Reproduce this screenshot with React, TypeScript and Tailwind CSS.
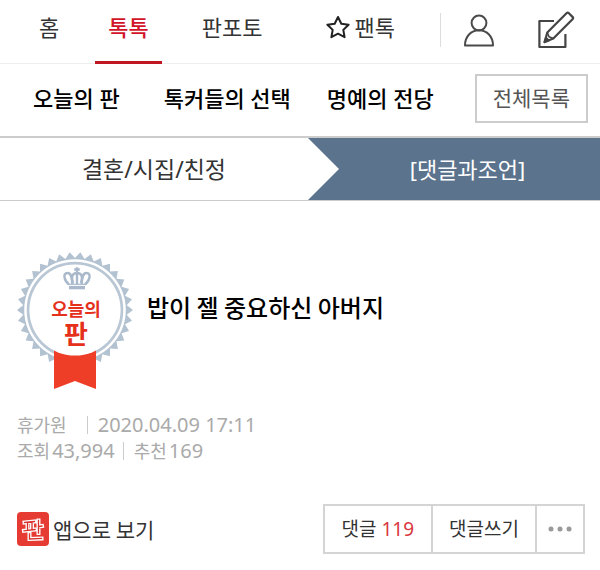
const TEETH = 34;

const teeth = Array.from({ length: TEETH * 2 }, (_, i) => {
  const angle = ((i + 1) * Math.PI) / TEETH - Math.PI / 2;
  const radius = i % 2 === 0 ? 58 : 52;
  return `${(58 + radius * Math.cos(angle)).toFixed(2)},${(58 + radius * Math.sin(angle)).toFixed(2)}`;
}).join(' ');

function StarIcon() {
  return (
    <svg width="24" height="24" viewBox="0 0 24 24" aria-hidden="true">
      <path
        d="M12 2l3.300 6.700 7.300 1-5.300 5.200 1.300 7.300-6.600-3.500-6.600 3.500 1.300-7.300-5.300-5.200 7.300-1z"
        fill="none"
        stroke="#222"
        strokeWidth="2"
        strokeLinejoin="round"
      />
    </svg>
  );
}

function PersonIcon() {
  return (
    <svg width="32" height="34" viewBox="0 0 32 34" fill="none" stroke="#4a4a4a" strokeWidth="2" aria-hidden="true">
      <circle cx="16" cy="10" r="7.400" />
      <path d="M2 32.500c0-9 6-15.200 14-15.200s14 6.200 14 15.200z" strokeLinejoin="round" />
    </svg>
  );
}

function WriteIcon() {
  return (
    <svg
      width="38"
      height="38"
      viewBox="0 0 38 38"
      fill="none"
      stroke="#444"
      strokeWidth="2.2"
      strokeLinejoin="round"
      aria-hidden="true"
    >
      <path d="M17 10H2.400v26h26V23" />
      <path d="M10.300 21.500L29.500 2.300q1.200-1.200 2.400 0l3.600 3.600q1.200 1.200 0 2.400L16.300 27.500 7.600 31z" />
      <path d="M10.300 21.500l1.700 4.300 4.300 1.700" strokeWidth="1.600" />
      <path d="M7.600 31l1.400-4 2.600 2.400z" fill="#444" />
    </svg>
  );
}

function TodayBadge() {
  return (
    <svg width="116" height="138" viewBox="0 0 116 138" role="img" aria-label="오늘의 판" className="shrink-0">
      <polygon points={teeth} fill="#b3c2d1" />
      <circle cx="58" cy="58" r="50.800" fill="#fff" />
      <circle cx="58" cy="58" r="46.600" fill="#fff" stroke="#b9c7d5" strokeWidth="3.400" />
      <path d="M37 84h42v53l-21-8-21 8z" fill="#ee3e28" />
      <circle cx="58" cy="58" r="45.600" fill="#fff" />
      {/* Crown */}
      <g fill="none" stroke="#a9b9cb" strokeWidth="2.400">
        <path d="M52 35.600h16" strokeWidth="3.400" />
        <path d="M52 32.500c-5-4-6.500-11.500-1.500-11.500 4 0 4.500 4.500 4.800 11M68 32.500c5-4 6.500-11.500 1.500-11.500-4 0-4.500 4.500-4.800 11" />
        <path d="M60 15.200V32M57.200 17.500h5.600M56 31c-2-6-1-10 4-10s6 4 4 10" />
        <path d="M51 32.300h18" strokeWidth="1.200" />
      </g>
      <text y="64" textAnchor="middle" fontWeight="700" fill="#e5301c">
        <tspan x="59" fontSize="18">오늘의</tspan>
        <tspan x="59" y="92" fontSize="26">판</tspan>
      </text>
    </svg>
  );
}

function AppIcon() {
  const strokes =
    'M7.500 10.500l10-1M10.500 11v6.500M15 10.500v6.500M7 18.800l11-1.300M21.500 8.500v12.500M22 14.500l3-.5M12.500 22v5l12-.5';
  return (
    <svg width="32" height="34" viewBox="0 0 32 34" fill="none" strokeLinecap="square" aria-hidden="true">
      <rect width="32" height="34" rx="4" fill="#e63b33" />
      <path d={strokes} stroke="#fff" strokeWidth="4" />
      <path d={strokes} stroke="#d8322c" strokeWidth="1.300" />
    </svg>
  );
}

export default function App() {
  return (
    <div className="min-h-screen w-full bg-white font-['Noto_Sans','Noto_Sans_CJK_KR',sans-serif] text-[22px] leading-8 text-[#333]">
      <header>
        {/* Main navigation */}
        <div className="flex h-16 items-start border-b border-[#eee]">
          <nav className="flex">
            <a href="#home" className="ml-[27px] flex h-16 items-center px-3 pb-[11px]">
              홈
            </a>
            <a
              href="#talk"
              className="ml-6 flex h-16 items-center border-b-[3px] border-[#bf1722] px-[13px] pb-2 font-medium text-[#d2142a]"
            >
              톡톡
            </a>
            <a href="#photo" className="ml-7 flex h-16 items-center px-3 pb-[11px]">
              판포토
            </a>
            <a href="#fan" className="ml-10 flex h-16 items-center gap-1 px-3 pb-[11px]">
              <StarIcon />
              팬톡
            </a>
          </nav>
          <div className="ml-auto flex h-16 items-center pr-[25px] pb-1">
            <span className="h-[34px] w-px bg-[#ddd]" />
            <button type="button" aria-label="내 정보" className="ml-[22px]">
              <PersonIcon />
            </button>
            <button type="button" aria-label="글쓰기" className="ml-[42px]">
              <WriteIcon />
            </button>
          </div>
        </div>

        {/* Sub navigation */}
        <div className="flex h-[74px] items-center border-b-2 border-[#ccc] pr-3 pb-1 pl-[33px] font-medium text-black">
          <a href="#today">오늘의 판</a>
          <a href="#choice" className="ml-11">
            톡커들의 선택
          </a>
          <a href="#fame" className="ml-9">
            명예의 전당
          </a>
          <button
            type="button"
            className="ml-auto h-[49px] border-2 border-[#ccc] px-4 text-[21px] font-normal text-[#555]"
          >
            전체목록
          </button>
        </div>
      </header>

      {/* Category */}
      <div className="grid h-[63px] grid-cols-[308fr_292fr] border-b border-[#ccc]">
        <a href="#category" className="flex items-center justify-center text-[23px]">
          결혼/시집/친정
        </a>
        <a href="#advice" className="flex items-center bg-[#5c738d] pr-1 text-white">
          <svg width="31" height="62" viewBox="0 0 31 62" aria-hidden="true">
            <path d="M0 0l31 31L0 62z" fill="#fff" />
          </svg>
          <span className="flex-1 text-center">[댓글과조언]</span>
        </a>
      </div>

      <main className="pt-[51px] pr-[15px] pl-[17px]">
        <div className="flex items-center gap-[14px]">
          <TodayBadge />
          <h1 className="pb-7 font-['Noto_Sans_CJK_KR',sans-serif] text-[24px] font-medium text-black">
            밥이 젤 중요하신 아버지
          </h1>
        </div>

        {/* Post info */}
        <div className="mt-[22px] text-[18px] leading-[26px] text-[#aaa]">
          <p className="flex items-center">
            휴가원
            <span className="mr-[10px] ml-5 h-[18px] w-px bg-[#ccc]" />
            <time dateTime="2020-04-09T17:11" className="text-[20px]">
              2020.04.09 17:11
            </time>
          </p>
          <p className="flex items-center">
            조회
            <span className="ml-[2px] text-[20px]">43,994</span>
            <span className="mr-[10px] ml-2 h-[18px] w-px bg-[#ccc]" />
            추천
            <span className="ml-[2px] text-[20px]">169</span>
          </p>
        </div>

        <div className="mt-10 flex items-center justify-between">
          <a href="#app" className="flex items-center gap-1 font-['Noto_Sans_CJK_KR',sans-serif] text-[21px]">
            <AppIcon />
            앱으로 보기
          </a>
          <div className="flex h-[50px] divide-x-2 divide-[#d4d4d4] border-2 border-[#d4d4d4] text-[19px]">
            <button type="button" className="px-[17px]">
              댓글 <span className="text-[#d9373f]">119</span>
            </button>
            <button type="button" className="px-4">
              댓글쓰기
            </button>
            <button type="button" aria-label="더보기" className="px-[11px]">
              <svg width="24" height="6" viewBox="0 0 24 6" fill="#999" aria-hidden="true">
                <circle cx="3" cy="3" r="2.500" />
                <circle cx="12" cy="3" r="2.500" />
                <circle cx="21" cy="3" r="2.500" />
              </svg>
            </button>
          </div>
        </div>
      </main>
    </div>
  );
}
